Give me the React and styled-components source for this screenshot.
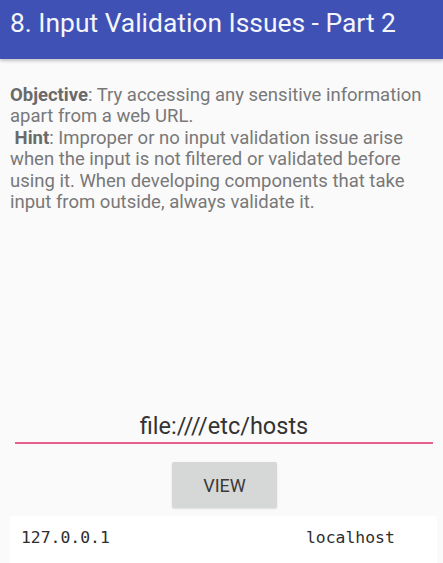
import React, { useState } from 'react';
import styled, { createGlobalStyle } from 'styled-components';

const GlobalStyle = createGlobalStyle`
  html, body {
    margin: 0;
    padding: 0;
    height: 100%;
    overflow: hidden;
    background: #fafafa;
  }
  #root {
    height: 100%;
  }
`;

const Screen = styled.div`
  height: 563px;
  display: flex;
  flex-direction: column;
  font-family: Roboto, "Liberation Sans", sans-serif;
  background: #fafafa;
`;

const AppBar = styled.header`
  height: 59px;
  box-sizing: border-box;
  flex-shrink: 0;
  padding: 8px 10px 0;
  background: #3f51b5;
  color: #f4f5fb;
  font-size: 26.4px;
  line-height: normal;
  box-shadow: 0 2px 3px rgba(0, 0, 0, 0.22);
  z-index: 1;
`;

const Description = styled.div`
  flex: 1;
  padding: 26px 10px 0;
  font-size: 18.5px;
  line-height: 21.4px;
  color: #787878;
`;

const Label = styled.b`
  color: #6a6a6a;
  font-weight: 700;
`;

const Field = styled.input`
  display: block;
  margin: 0 10px 0 15px;
  width: calc(100% - 25px);
  box-sizing: border-box;
  padding: 0 0 2px;
  border: none;
  border-bottom: 2px solid #e5618b;
  background: transparent;
  font-family: Roboto, "Liberation Sans", sans-serif;
  font-size: 23.5px;
  color: #333;
  text-align: center;
  outline: none;
`;

const ButtonRow = styled.div`
  display: flex;
  justify-content: center;
  padding: 18px 0 8px 6px;
`;

const ViewButton = styled.button`
  width: 105px;
  height: 46px;
  border: none;
  border-radius: 2px;
  background: #d6d7d7;
  box-shadow: 0 1px 2px rgba(0, 0, 0, 0.12);
  font-family: Roboto, "Liberation Sans", sans-serif;
  font-size: 18px;
  color: #3a3a3a;
  cursor: pointer;
`;

const Output = styled.pre`
  margin: 0 6px 0 10px;
  height: 47px;
  box-sizing: border-box;
  padding: 12px 11px 0;
  background: #ffffff;
  border-radius: 3px 3px 0 0;
  font-family: "DejaVu Sans Mono", "Liberation Mono", monospace;
  font-size: 16.4px;
  line-height: normal;
  color: #2e2e2e;
  tab-size: 285px;
`;

export default function App() {
  const [url, setUrl] = useState('file:////etc/hosts');

  return (
    <>
      <GlobalStyle />
      <Screen>
        <AppBar>8. Input Validation Issues - Part 2</AppBar>
        <Description>
          <Label>Objective</Label>: Try accessing any sensitive information apart from a web URL.
          <br />
          &nbsp;<Label>Hint</Label>: Improper or no input validation issue arise when the input is
          not filtered or validated before using it. When developing components that take input
          from outside, always validate it.
        </Description>
        <Field value={url} onChange={(e) => setUrl(e.target.value)} />
        <ButtonRow>
          <ViewButton>VIEW</ViewButton>
        </ButtonRow>
        <Output>{'127.0.0.1\tlocalhost'}</Output>
      </Screen>
    </>
  );
}
